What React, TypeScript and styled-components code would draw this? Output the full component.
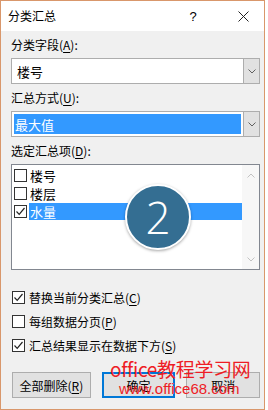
import * as React from "react";
import styled, { createGlobalStyle } from "styled-components";

const FONT = `"Noto Sans CJK SC", "Liberation Sans", sans-serif`;

const GlobalStyle = createGlobalStyle`
  html, body {
    margin: 0;
    padding: 0;
    background: #ffffff;
  }
  * {
    box-sizing: border-box;
  }
`;

const Chevron: React.FC<{ up?: boolean; color?: string }> = ({ up, color = "#606060" }) => (
  <svg width="8" height="5" viewBox="0 0 8 5">
    <path
      d={up ? "M0.5 4.5 L4 1 L7.5 4.5" : "M0.5 0.5 L4 4 L7.5 0.5"}
      fill="none"
      stroke={color}
      strokeWidth="1"
    />
  </svg>
);

const Check = () => (
  <svg width="11" height="11" viewBox="0 0 11 11">
    <path d="M1.5 5.5 L4.2 8.3 L9.5 2" fill="none" stroke="#222" strokeWidth="1.2" />
  </svg>
);

const App: React.FC = () => {
  const items = [
    { name: "楼号", checked: false, selected: false },
    { name: "楼层", checked: false, selected: false },
    { name: "水量", checked: true, selected: true },
  ];

  return (
    <>
      <GlobalStyle />
      <Window>
        <TitleBar>
          <Title>分类汇总</Title>
          <HelpButton>?</HelpButton>
          <CloseButton>
            <svg width="11" height="11" viewBox="0 0 11 11">
              <path d="M0.5 0.5 L10.5 10.5 M10.5 0.5 L0.5 10.5" stroke="#222" strokeWidth="1" />
            </svg>
          </CloseButton>
        </TitleBar>
        <Body>
          <Label>
            分类字段(<u>A</u>):
          </Label>
          <Combo>
            <ComboValue>楼号</ComboValue>
            <ComboArrow>
              <Chevron />
            </ComboArrow>
          </Combo>

          <Label>
            汇总方式(<u>U</u>):
          </Label>
          <Combo>
            <ComboValue focused>最大值</ComboValue>
            <ComboArrow>
              <Chevron />
            </ComboArrow>
          </Combo>

          <Label>
            选定汇总项(<u>D</u>):
          </Label>
          <ListBox>
            <ListRows>
              {items.map(item => (
                <ListRow key={item.name}>
                  <Box>{item.checked && <Check />}</Box>
                  <RowText selected={item.selected}>{item.name}</RowText>
                </ListRow>
              ))}
            </ListRows>
            <ScrollBar>
              <Chevron up color="#c2c2c2" />
              <Chevron color="#c2c2c2" />
            </ScrollBar>
            <Badge>2</Badge>
          </ListBox>

          <Options>
            <Option>
              <Box>
                <Check />
              </Box>
              <span>
                替换当前分类汇总(<u>C</u>)
              </span>
            </Option>
            <Option>
              <Box />
              <span>
                每组数据分页(<u>P</u>)
              </span>
            </Option>
            <Option>
              <Box>
                <Check />
              </Box>
              <span>
                汇总结果显示在数据下方(<u>S</u>)
              </span>
            </Option>
          </Options>

          <Buttons>
            <Button width={79}>
              <span>
                全部删除(<u>R</u>)
              </span>
            </Button>
            <Button width={74} primary>
              确定
            </Button>
            <Button width={74}>取消</Button>
          </Buttons>

          <Watermark>
            <WatermarkTitle>office教程学习网</WatermarkTitle>
            <WatermarkUrl>www.office68.com</WatermarkUrl>
          </Watermark>
        </Body>
      </Window>
    </>
  );
};

const Window = styled.div`
  position: relative;
  width: 265px;
  height: 410px;
  border: 1px solid #d9976b;
  background: #f0f0f0;
  font-family: ${FONT};
  font-size: 12px;
  color: #000;
  overflow: hidden;
`;

const TitleBar = styled.div`
  display: flex;
  align-items: center;
  height: 30px;
  background: #ffffff;
  padding-left: 7px;
`;

const Title = styled.div`
  flex: 1;
  font-size: 12px;
  line-height: 16px;
`;

const HelpButton = styled.div`
  width: 30px;
  text-align: center;
  font-family: "Liberation Sans", sans-serif;
  font-size: 13px;
  margin-right: 18px;
`;

const CloseButton = styled.div`
  display: flex;
  align-items: center;
  justify-content: center;
  width: 34px;
  margin-right: 4px;
`;

const Body = styled.div`
  position: relative;
  padding: 6px 4px 0 10px;
  display: flex;
  flex-direction: column;
`;

const Label = styled.div`
  height: 16px;
  line-height: 16px;
  margin-bottom: 5px;

  u {
    text-decoration-thickness: 1px;
    text-underline-offset: 2px;
  }
`;

const Combo = styled.div`
  display: flex;
  height: 26px;
  border: 1px solid #adadad;
  background: #ffffff;
  margin-bottom: 6px;
`;

const ComboValue = styled.div<{ focused?: boolean }>`
  flex: 1;
  display: flex;
  align-items: center;
  margin: 2px;
  padding-left: ${p => (p.focused ? "1px" : "3px")};
  background: ${p => (p.focused ? "#3399ff" : "transparent")};
  color: ${p => (p.focused ? "#ffffff" : "#000")};
  font-size: 13px;
`;

const ComboArrow = styled.div`
  display: flex;
  align-items: center;
  justify-content: center;
  width: 16px;
  background: #e1e1e1;
  border-left: 1px solid #adadad;
`;

const ListBox = styled.div`
  position: relative;
  display: flex;
  height: 106px;
  border: 1px solid #828790;
  background: #ffffff;
  margin-bottom: 19px;
`;

const ListRows = styled.div`
  flex: 1;
  display: flex;
  flex-direction: column;
  padding: 1px 0 0 2px;
`;

const ListRow = styled.div`
  display: flex;
  align-items: center;
  height: 18px;
  gap: 2px;
`;

const Box = styled.span`
  display: inline-flex;
  align-items: center;
  justify-content: center;
  width: 13px;
  height: 13px;
  border: 1px solid #333333;
  background: #ffffff;
  flex-shrink: 0;
`;

const RowText = styled.span<{ selected?: boolean }>`
  flex: 1;
  height: 17px;
  line-height: 17px;
  padding-left: 1px;
  font-size: 13px;
  background: ${p => (p.selected ? "#3399ff" : "transparent")};
  color: ${p => (p.selected ? "#ffffff" : "#000")};
`;

const ScrollBar = styled.div`
  display: flex;
  flex-direction: column;
  align-items: center;
  justify-content: space-between;
  width: 17px;
  padding: 8px 0 7px;
  background: #f7f7f7;
`;

const Badge = styled.div`
  position: absolute;
  left: 113px;
  top: 19px;
  width: 66px;
  height: 66px;
  border-radius: 50%;
  background: #346e92;
  border: 2px solid #ffffff;
  box-shadow: 0 1px 3px rgba(0, 0, 0, 0.35);
  color: #ffffff;
  display: flex;
  align-items: center;
  justify-content: center;
  font-family: "Open Sans", "Liberation Sans", sans-serif;
  font-weight: 300;
  font-size: 44px;
`;

const Options = styled.div`
  display: flex;
  flex-direction: column;
  gap: 8px;
  padding-left: 1px;
  margin-bottom: 19px;
`;

const Option = styled.div`
  display: flex;
  align-items: center;
  gap: 4px;
  height: 16px;
  font-size: 12px;

  u {
    text-underline-offset: 2px;
  }
`;

const Buttons = styled.div`
  display: flex;
  gap: 11px;
  padding-left: 1px;
`;

const Button = styled.div<{ width: number; primary?: boolean }>`
  display: flex;
  align-items: center;
  justify-content: center;
  width: ${p => p.width}px;
  height: 26px;
  background: #e1e1e1;
  border: ${p => (p.primary ? "2px solid #0078d7" : "1px solid #adadad")};
  font-size: 12px;

  u {
    text-underline-offset: 2px;
  }
`;

const Watermark = styled.div`
  position: absolute;
  left: 109px;
  top: 327px;
  display: flex;
  flex-direction: column;
  align-items: flex-start;
  color: #ee1c25;
  pointer-events: none;
`;

const WatermarkTitle = styled.div`
  font-family: ${FONT};
  font-size: 19px;
  line-height: 22px;
  letter-spacing: -0.3px;
`;

const WatermarkUrl = styled.div`
  font-family: "Liberation Sans", sans-serif;
  font-size: 15px;
  line-height: 16px;
  margin-top: 1px;
  margin-left: 9px;
`;

export default App;
